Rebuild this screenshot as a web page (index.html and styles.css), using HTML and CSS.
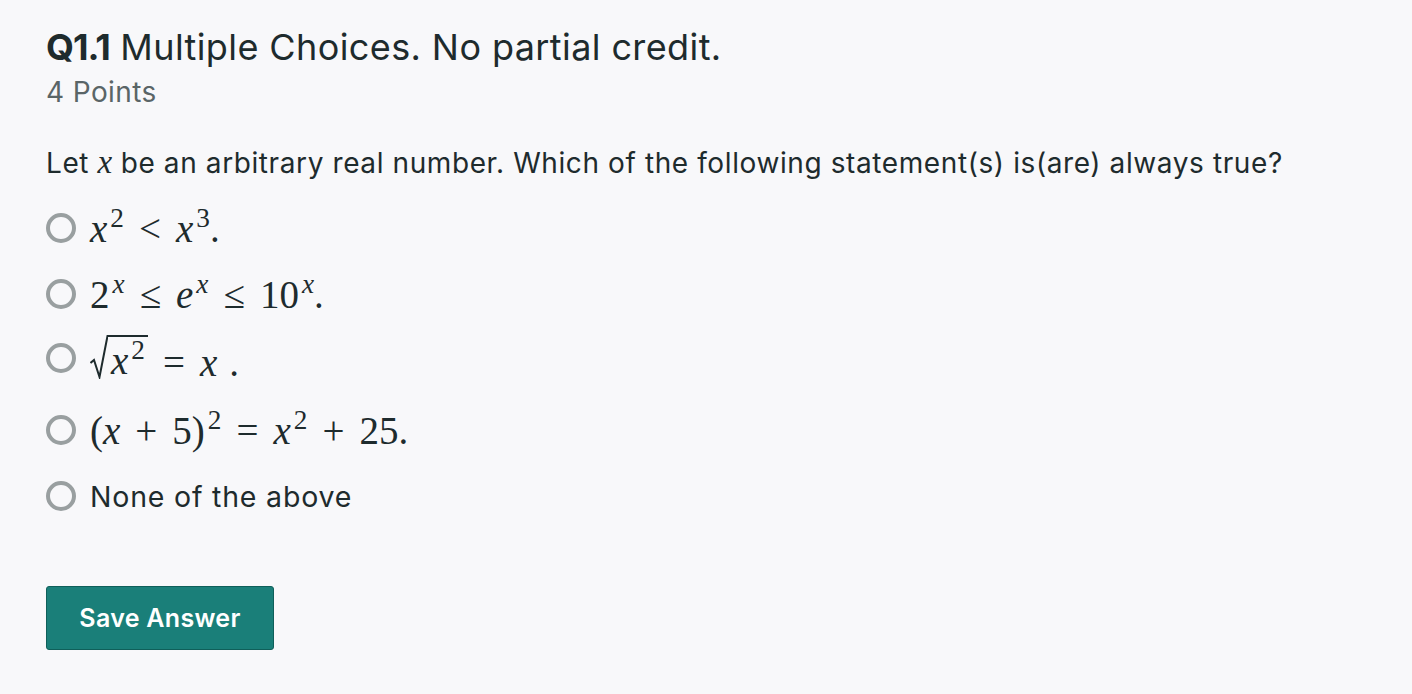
FILE: index.html
```html
<!DOCTYPE html>
<html>
<head>
<meta charset="utf-8">
<link rel="stylesheet" href="styles.css">
</head>
<body>
<main class="question">
  <header class="q-head">
    <h1 class="q-title"><span class="q-num">Q1.1</span> Multiple Choices. No partial credit.</h1>
    <div class="q-points">4 Points</div>
  </header>
  <p class="q-text">Let <span class="m mi">x</span> be an arbitrary real number. Which of the following statement(s) is(are) always true?</p>
  <ul class="options">
    <li class="option"><span class="radio"></span><span class="m"><span class="mi">x</span><sup>2</sup><span class="rel">&lt;</span><span class="mi">x</span><sup>3</sup>.</span></li>
    <li class="option"><span class="radio"></span><span class="m">2<sup class="mi">x</sup><span class="rel">≤</span><span class="mi">e</span><sup class="mi">x</sup><span class="rel">≤</span>10<sup class="mi">x</sup>.</span></li>
    <li class="option tall"><span class="radio"></span><span class="m"><span class="sqrt"><svg class="surd" width="18" height="44" viewBox="0 0 18 44"><path d="M0.5 28 L4 25 L9.5 42 L17.5 1 H18" fill="none" stroke="#1e2b2d" stroke-width="2" stroke-linejoin="miter"/></svg><span class="rad"><span class="mi">x</span><sup>2</sup></span></span><span class="rel">=</span><span class="mi">x</span><span class="dot">.</span></span></li>
    <li class="option"><span class="radio"></span><span class="m">(<span class="mi">x</span><span class="bin">+</span>5)<sup>2</sup><span class="rel">=</span><span class="mi">x</span><sup>2</sup><span class="bin">+</span>25.</span></li>
    <li class="option plain"><span class="radio"></span><span class="label">None of the above</span></li>
  </ul>
  <button class="save">Save Answer</button>
</main>
</body>
</html>
```
FILE: styles.css
```css
html, body {
  margin: 0;
  padding: 0;
  background: #f8f8fa;
}
body {
  font-family: "Inter", "Lato", "Liberation Sans", sans-serif;
  color: #1e2b2d;
}
.question {
  padding: 24px 46px;
}
.q-head {
  display: flex;
  flex-direction: column;
}
.q-title {
  margin: 0;
  font-size: 36px;
  font-weight: 400;
  line-height: 46px;
  letter-spacing: 0.4px;
  color: #1e2b2d;
}
.q-num {
  font-weight: 700;
  letter-spacing: -1px;
}
.q-points {
  font-size: 28px;
  line-height: 44px;
  letter-spacing: 0.4px;
  color: #5a6567;
}
.q-text {
  margin: 28px 0 0;
  font-size: 28px;
  line-height: 40px;
  letter-spacing: 0.6px;
}
.m {
  font-family: "Liberation Serif", "DejaVu Serif", serif;
  font-size: 39px;
  letter-spacing: 0;
}
.q-text .m { font-size: 33px; }
.mi {
  font-style: italic;
}
sup {
  font-size: 0.7em;
  vertical-align: 0.55em;
  line-height: 0;
  margin-left: 3px;
}
.rel, .bin {
  margin: 0 15px;
}
.sqrt {
  display: inline-flex;
  align-items: flex-end;
  position: relative;
  top: 3px;
}
.surd {
  display: block;
}
.rad {
  border-top: 2px solid #1e2b2d;
  padding: 5px 3px 0 3px;
  line-height: 37px;
  display: inline-block;
  margin-bottom: 0;
}
.dot {
  margin-left: 12px;
}
.options {
  list-style: none;
  margin: 23px 0 0;
  padding: 0;
  display: flex;
  flex-direction: column;
  gap: 22px;
}
.option {
  display: flex;
  align-items: center;
  gap: 14px;
  height: 44px;
}
.option.tall {
  margin-top: -2px;
  margin-bottom: 6px;
}
.radio {
  border: 4px solid #999fa0;
  border-radius: 50%;
  box-sizing: content-box;
  flex: none;
  width: 22px;
  height: 22px;
}
.label {
  font-size: 28.5px;
  letter-spacing: 0.8px;
}
.save {
  margin-top: 68px;
  width: 228px;
  height: 64px;
  background: #1a7f79;
  border: 1px solid #0f5f5a;
  border-radius: 3px;
  color: #fff;
  font-family: inherit;
  font-size: 25px;
  font-weight: 600;
  letter-spacing: 0.3px;
}
```
